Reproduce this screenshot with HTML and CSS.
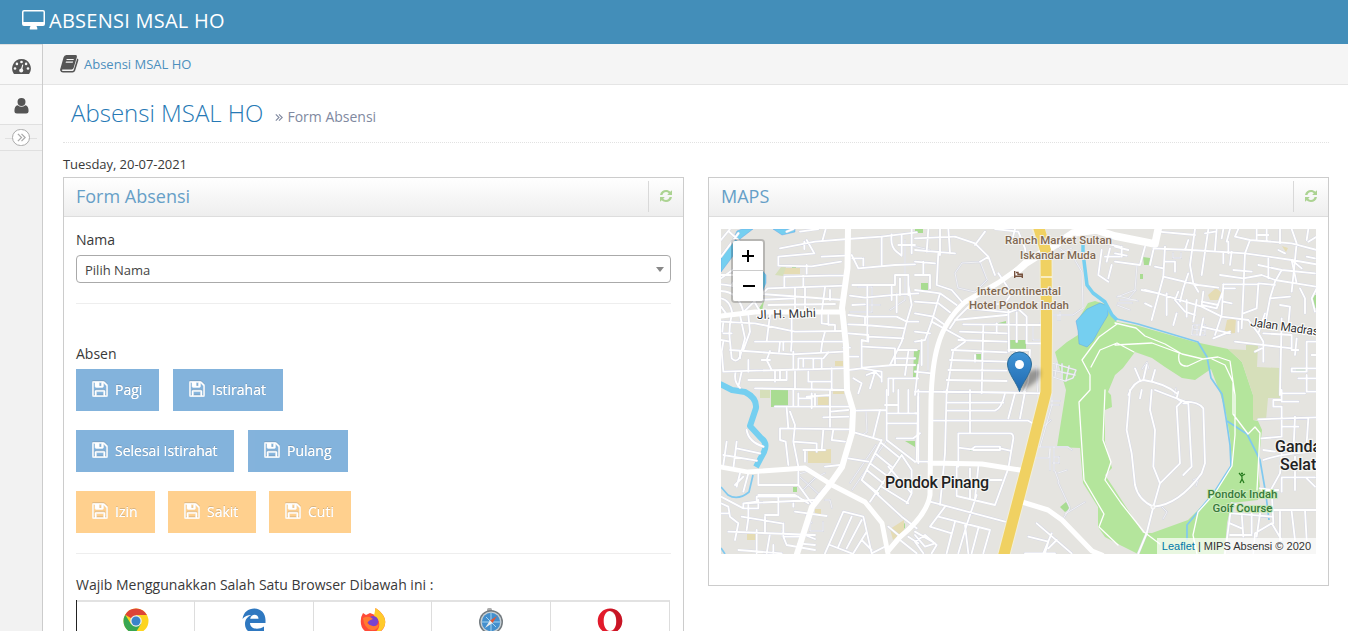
FILE: index.html
```html
<!DOCTYPE html>
<html lang="id">
<head>
<meta charset="utf-8">
<title>Absensi MSAL HO</title>
<link rel="stylesheet" href="styles.css">
</head>
<body>
<svg class="defs" width="0" height="0" aria-hidden="true">
  <defs>
    <symbol id="save" viewBox="0 0 16 16"><path stroke="#fff" stroke-width=".45" fill-rule="evenodd" d="M1.3 .3H11.2Q11.9 .3 12.4.7L15.3 3.6Q15.7 4.1 15.7 4.8V14.6Q15.7 15.7 14.6 15.7H1.4Q.3 15.7 .3 14.6V1.4Q.3 .3 1.3 .3ZM1.5 1.5V14.5H3V10.3Q3 9.2 4.1 9.2H11.9Q13 9.2 13 10.3V14.5H14.5V4.9L11.5 1.8V5.3Q11.5 6.4 10.4 6.4H4.1Q3 6.4 3 5.3V1.5ZM7.2 1.5V5H9.5V1.5ZM4.4 10.6V14.5H11.6V10.6Z"/></symbol>
    <symbol id="refresh" viewBox="0 0 14 14"><path d="M1 6C1.6 2.7 4.1 1 7 1C8.7 1 10.1 1.6 11.3 2.7L12.6 1.4Q13 1.1 13 1.7V6H8.7Q8.2 6 8.6 5.5L9.8 4.2C7.6 2.1 4.3 2.9 3.4 6ZM13 8C12.4 11.3 9.9 13 7 13C5.3 13 3.9 12.4 2.7 11.3L1.4 12.6Q1 12.9 1 12.3V8H5.3Q5.8 8 5.4 8.5L4.2 9.8C6.4 11.9 9.7 11.1 10.6 8Z"/></symbol>
    <symbol id="angles" viewBox="0 0 10 10"><path d="M1 1l4 4-4 4M5 1l4 4-4 4" fill="none" stroke="currentColor" stroke-width="1.4"/></symbol>
  </defs>
</svg>

<header class="navbar">
  <svg class="brand-icon" viewBox="0 0 23 20"><path fill="#fff" fill-rule="evenodd" d="M2 0H21Q23 0 23 2V14Q23 16 21 16H14.5L15.3 18V19.6H7.7V18L8.500 16H2Q0 16 0 14V2Q0 0 2 0ZM2 1.500Q1.500 1.500 1.500 2V12H21.500V2Q21.500 1.500 21 1.500Z"/></svg>
  <span class="brand">ABSENSI MSAL HO</span>
</header>

<div class="shell">
  <nav class="sidebar">
    <a class="side-item"><svg width="19" height="15" viewBox="0 0 19 15"><path fill="#555" d="M9.5 0A9.4 9.4 0 0 1 17.4 14.4Q17 15 16.4 15H2.6Q2 15 1.6 14.4A9.4 9.4 0 0 1 9.5 0Z"/><g fill="#f8f8f8"><circle cx="3" cy="9.5" r="1.3"/><circle cx="4.9" cy="4.9" r="1.3"/><circle cx="9.5" cy="3" r="1.3"/><circle cx="14.1" cy="4.9" r="1.3"/><circle cx="16" cy="9.5" r="1.3"/><circle cx="9.2" cy="11.6" r="2"/><path d="M10.3 5.4l1 .3-1.2 5.6-1.4-.3z"/></g></svg></a>
    <a class="side-item"><svg width="15" height="16" viewBox="0 0 15 16"><path fill="#555" d="M7.5 0A4 4 0 0 1 11.5 4A4 4.2 0 0 1 7.5 8A4 4.2 0 0 1 3.5 4A4 4 0 0 1 7.5 0ZM3.7 7.3Q7.5 10.4 11.3 7.3Q14.6 7.7 14.6 13.2Q14.6 15.6 12.2 15.6H2.8Q.4 15.6 .4 13.2Q.4 7.7 3.7 7.3Z"/></svg></a>
    <div class="side-toggle"><span class="toggle-knob"><svg width="9" height="9"><use href="#angles"/></svg></span></div>
  </nav>

  <main class="main">
    <div class="crumbs">
      <svg width="19" height="18" viewBox="0 0 19 18"><path fill="#555" fill-rule="evenodd" d="M6.3 0H15.7Q17.4 .2 16.9 2L13.6 13Q13.1 14.4 11.6 14.4H2.7Q1.8 14.4 1.8 15.2Q2 16 3 16H12.4Q13.3 16 13.7 15L17.2 3.4Q18.9 3.8 18.3 5.4L15.2 15.6Q14.5 17.6 12.5 17.6H3Q.7 17.5 .1 15.3Q0 14.2 .5 13.3L3.6 2.3Q4.3 .2 6.3 0ZM6.7 4L6.4 5.1H13.5L13.9 4ZM6 6.6L5.6 7.7H12.7L13.1 6.6Z"/></svg>
      <a>Absensi MSAL HO</a>
    </div>
    <div class="content">
      <div class="page-header">
        <h1>Absensi MSAL HO</h1>
        <small><svg width="8" height="9"><use href="#angles"/></svg>Form Absensi</small>
      </div>
      <p class="date">Tuesday, 20-07-2021</p>
      <div class="columns">
        <section class="widget widget-form">
          <div class="widget-head"><h4>Form Absensi</h4><span class="tool"><svg width="14" height="14"><use href="#refresh"/></svg></span></div>
          <div class="widget-body">
            <label class="nama">Nama</label>
            <div class="select"><span>Pilih Nama</span><i></i></div>
            <hr>
            <label class="absen">Absen</label>
            <div class="btn-row">
              <button class="btn w83"><svg><use href="#save"/></svg>Pagi</button>
              <button class="btn w110"><svg><use href="#save"/></svg>Istirahat</button>
            </div>
            <div class="btn-row">
              <button class="btn w158"><svg><use href="#save"/></svg>Selesai Istirahat</button>
              <button class="btn w100"><svg><use href="#save"/></svg>Pulang</button>
            </div>
            <div class="btn-row tight">
              <button class="btn warn w79"><svg><use href="#save"/></svg>Izin</button>
              <button class="btn warn w88"><svg><use href="#save"/></svg>Sakit</button>
              <button class="btn warn w82"><svg><use href="#save"/></svg>Cuti</button>
            </div>
            <hr>
            <p class="note">Wajib Menggunakkan Salah Satu Browser Dibawah ini :</p>
            <div class="browsers">
              <div><svg width="26" height="26" viewBox="0 0 26 26"><circle cx="13" cy="13" r="12.5" fill="#fdd41f"/><path fill="#dd4437" d="M13 13L2.2 6.7A12.5 12.5 0 0 1 23.9 7H13Z"/><path fill="#38a652" d="M2.2 6.7A12.5 12.5 0 0 0 12 25.5L18 16L8 16Z"/><circle cx="13" cy="13" r="5.8" fill="#eee"/><circle cx="13" cy="13" r="4.5" fill="#3a83c9"/></svg></div>
              <div><svg width="24" height="26" viewBox="0 0 24 26"><path fill="#2f78c0" fill-rule="evenodd" d="M.5 11C1.5 4 6.3.5 12.3.5C19.2.5 23.5 5.5 23.5 12V15H8C8.2 21 16 22.5 22 18.5V23.5C14 28 3 25.5 3 16C3 11.5 5.5 8.7 9.3 7C5.5 7 2.5 8.5.5 11ZM8.2 10.7H16.5C16.5 5.5 9 5.5 8.2 10.7Z"/></svg></div>
              <div><svg width="26" height="26" viewBox="0 0 26 26"><path fill="#ff4b38" d="M3 5L6 7L10 5L15 7L15.5 0C20 3 25.5 8 25.2 14A12.2 12.2 0 0 1 .8 14Q.5 9 3 5Z"/><path fill="#ffca2b" d="M15.5 0C20 3 25.8 8 25.2 15C24.5 21 20 25 14 25C22 20 20 11 14 8Z"/><circle cx="13" cy="13.2" r="5.3" fill="#7743d0"/><path fill="#ff7b31" d="M3 10Q9 7 13 11Q9 12 7 15Q13 21 19 16Q18 23 11 22Q4 20 3 10Z"/></svg></div>
              <div><svg width="26" height="27" viewBox="0 0 26 27"><rect x="9" y="0" width="5" height="4" rx="1.5" fill="#aaa"/><circle cx="13" cy="14" r="12" fill="#737b80"/><circle cx="13" cy="14" r="10.5" fill="#c8d0d5"/><circle cx="13" cy="14" r="9.2" fill="#438fcd"/><path stroke="#a6d4f1" stroke-width="1" d="M13 5V23M4 14H22M8 9L18 19"/><path fill="#e35735" d="M19 8L14.5 15L12 12.5Z"/><path fill="#eee" d="M7 20L14.5 15L12 12.5Z"/></svg></div>
              <div><svg width="26" height="26" viewBox="0 0 26 26"><path fill="#e21b2c" fill-rule="evenodd" d="M13 .5C20 .5 25.3 6 25.3 13S20 25.5 13 25.5S.7 20 .7 13S6 .5 13 .5ZM13 3C9 3 6.7 7.5 6.7 13S9 23 13 23S19.3 18.5 19.3 13S17 3 13 3Z"/><path fill="#a80f1d" d="M15 .8C21 1.5 25.3 6.5 25.3 13S20 25 14 25.4C18 23 19.8 18 19.3 13Q19 5 13 3L10 2Q12 .5 15 .8Z" opacity=".45"/></svg></div>
            </div>
          </div>
        </section>

        <section class="widget widget-map">
          <div class="widget-head"><h4>MAPS</h4><span class="tool"><svg width="14" height="14"><use href="#refresh"/></svg></span></div>
          <div class="widget-body">
            <div class="map">
              <svg class="map-canvas" viewBox="721 229 595 325">
                <defs>
                  <linearGradient id="pin" x2="0" y2="1"><stop stop-color="#4094d5"/><stop offset="1" stop-color="#2069b0"/></linearGradient>
                  <filter id="soft" x="-30%" y="-30%" width="160%" height="160%"><feGaussianBlur stdDeviation="2"/></filter>
                  <g id="minor">
                    <g transform="translate(715 225) scale(.33333)">
                      <path d="M195 70L300 50L398 42L500 35L605 22M268 50V72M390 92L320 95M275 45L298 85L190 95V122L290 124L378 110M275 120V146M208 188V155L340 152H392M265 153V186M85 262L158 190L392 182M18 160L60 130M18 150H60M45 12L18 45M70 25L18 95M40 18L75 50M215 20L235 12M255 20L310 12M332 12L322 48"/>
                      <path d="M18 178Q80 180 115 225L140 268M18 198Q70 200 85 260M18 220Q45 225 52 265M18 245L35 268M60 165L50 180M120 225L240 220M140 207L385 225M240 190V262M270 187V262M330 187L320 262M160 240L360 237M345 195V225"/>
                      <path d="M18 290L120 295L240 320L385 318M50 270Q40 310 45 350L50 400Q65 415 75 395L90 340L75 270M100 270L105 320L85 375M165 268L155 350M230 268V350M25 325H50M120 350H385M18 345L45 350M25 290L22 320M195 350L192 380M230 350L228 378M45 375L90 378L230 388L385 380M320 268V295L360 300V315M340 270V300M330 320L322 350L318 380"/>
                      <path d="M25 350L20 380L25 440L120 437L385 430M75 378V400M165 378L155 405L170 435M100 405V440M140 405H165M235 380V430M250 430V400H320V428M265 425V405M295 428V400M340 382L325 400M350 430V495M240 490V440M80 440L70 485M62 440Q55 470 75 488M180 438V470M195 438V465M215 438V465M100 465H215M120 490L390 495M280 440V470H350M290 470V490M205 350V375"/>
                      <path d="M410 90L430 130L540 120L600 118M445 100V122M412 100H440M500 35V120M530 28Q525 65 545 80L560 92M560 30V88M590 12V85M550 60H600M412 180H540V150H580V210M405 212L450 218L555 208L610 205M457 180V345M530 185V225M545 208V262M555 160V210M412 240L450 238M400 270L450 275V300L400 298M450 275H545L575 290H610M450 300L570 310M580 180L590 240L575 290L560 350L525 420"/>
                      <path d="M400 325L460 330V350L440 345V430M445 365L540 370V420L440 428M385 368H405M460 335L565 340M440 390V425M525 420H600M545 400H600M550 375H605M400 395H430M400 435L440 430L500 440V470M520 510V460H610M415 460L440 475L430 505M455 450L480 440L465 490M480 440L500 460M535 460V500M580 380L570 450"/>
                    </g>
                    <g transform="translate(915 225) scale(.33333)">
                      <path d="M0 75L120 85M0 110L60 115M75 12V90M100 12L105 85M0 150H45V190M25 110V150M70 85L65 180L110 195L145 235M40 12L35 80M0 40L120 35M0 195L75 205L125 240M0 230L70 235L105 262M0 265L55 275L90 300M0 350L30 345L50 290L75 205M0 320L45 325M20 345V420M0 440L50 445M0 510L10 420"/>
                      <path d="M120 35L180 55L220 95L195 110M180 60L210 20M220 95L240 150M240 12L310 20L330 70L335 105M300 12L290 50"/>
                      <path d="M160 250L280 262M180 235L280 238M120 285L275 270M105 310L125 280L180 225M50 290L150 345M145 298L375 300M135 320L275 325M130 345L275 350M110 375L275 382M105 405L275 410M100 435L275 437M95 465L275 468M85 500L380 505M280 235L282 380M305 262V350M282 262L310 252L335 275V355H380M205 300L200 505M245 295V325M180 390V410M150 350L115 375L95 505M280 375H345L340 470L325 505M305 375L308 470"/>
                      <path d="M525 45L570 55L615 65M585 70L575 110M560 75L550 150L580 170M570 95H615M590 120L580 160M250 145L290 205M290 205L270 235"/>
                    </g>
                    <g transform="translate(1115 225) scale(.33333)">
                      <path d="M0 110L75 120M150 65L145 155L110 285M120 125L145 130M150 110H180V140M115 75L105 120M115 70L230 75L390 85L530 105L605 118M0 85L35 92M20 65V95M0 65L40 75M90 65L75 120M130 20L240 30M240 12L225 120L235 175M220 45L210 75M280 12L260 150M305 12L300 75M345 12L335 50M325 12L320 40M270 25L300 20M370 12L360 35L405 45L530 55L605 75M340 50V85M325 85V115M405 45L390 85L380 310M350 80L345 120M425 12V45M455 12V45M430 30H460M495 12V55M530 12L545 55L530 200"/>
                      <path d="M315 150L385 160L440 150L480 165L605 185M355 135L410 140M430 120L500 135L600 145M460 100V160M500 135L480 170L465 220L525 215M530 105L545 175M325 178H430L425 250L385 265M325 190H360M465 220L450 300M430 175L480 180M555 190L570 220V265M495 240L525 245L520 300M580 12L575 45M605 35L580 50M575 95L600 100M490 75L510 85M605 190L590 220L600 260"/>
                      <path d="M145 155L250 180L310 188M220 145L205 190L195 230M90 195L130 205L260 245L320 275L400 285M130 205L80 195M155 205V270M190 200L180 225L210 260L240 270M215 225V275M245 225L235 290M265 200L260 240L305 250L325 195M325 178L320 270L300 330M260 230L310 240M265 280L255 330M260 305L345 325M295 340L345 320M325 230L350 235M185 265L175 300M235 175L250 200M90 235L110 245"/>
                      <path d="M360 350L530 370M370 290V320M400 285L430 325L445 350V410M430 325L450 265M500 280L495 510M445 325L530 330M440 370L420 380M530 330V375H550M545 340L540 390M605 350H575V440H530V430H605M575 450V500H605M500 505H570M530 105L560 130M550 460H605M605 390H590"/>
                      <path d="M40 510Q55 470 85 465Q150 475 185 505M85 465L95 420M120 435L110 470M60 430L75 465"/>
                    </g>
                    <g transform="translate(715 390) scale(.33333)">
                      <path d="M35 155L25 225M65 155L55 235M65 175L135 190M25 195L125 212M95 120Q100 155 145 170M235 0V50M250 10V50M180 50H400M290 10V55M275 20L345 15M345 0V110M250 25H290M325 82L400 80M215 55L220 115M195 115L410 118M195 115V150L212 155L220 225M225 65L240 105L235 155L250 230M235 155L305 160V185M265 180L330 180M325 118L320 180M355 118L350 150L390 155M345 65L400 60M270 185V215M300 12V45M330 230L375 225M250 245V285H130V250M75 250L65 290M100 250L85 305M85 260L60 285M250 285L290 340"/>
                      <path d="M18 320L85 355V340L125 335V320H250M130 315H240L280 340M90 340L300 330M18 340L40 350L45 380L70 400L60 450M18 370H40M100 340V385L95 420M85 355H130V330M80 380L200 400M150 380V430M150 375H190V320M40 425L300 435M125 420V490M165 430L155 490M175 465V490M205 400V440L215 465L300 480M235 340V350M240 365L335 378M270 435L300 447M250 460L300 465M70 480L200 490M210 440H265"/>
                      <path d="M420 62L515 60V0M495 60L475 140M410 125L495 150M400 205L460 215M515 60V150L600 215M515 100H610M550 0V70M580 0V70M520 70H605M510 45H550M545 145H595L615 130M500 150L440 270L560 380L605 415M500 160L550 200M480 190L530 230M465 220L520 260M455 240L505 280M560 195L465 335M440 270L490 310M560 195L590 240V310L575 340M520 230L590 310M500 290L580 340M610 20V220"/>
                      <path d="M330 490L385 365L445 380L470 490M345 465L410 490M410 380L370 470M440 390L395 475M455 425L415 490M440 450L470 480M470 490L510 470M555 450L605 490M520 410L550 435M580 440L610 460"/>
                    </g>
                    <g transform="translate(915 390) scale(.33333)">
                      <path d="M0 5L330 8M95 0L90 190L75 345M0 70H10M10 0L5 215H45M95 38H265M95 62H240Q260 55 270 10M50 92H340L350 98M165 0V130M300 10L280 85M330 5L315 85M130 230V130H285Q295 130 295 145L280 235L240 345L125 318V230M130 173L170 178L180 170H255V180H175M255 175L285 182M165 235V325M180 325L190 230M215 270H260M45 335L270 395M90 350L45 410L110 430L95 490M70 380L225 420L205 490M185 315L155 405L130 490M120 395L95 490M190 415L170 490M150 405L160 490M0 455L30 435L65 465L50 490M0 425L60 460L30 470L0 435M0 455L25 490M0 215H45"/>
                      <path d="M365 400L470 490M340 440L400 455L390 490M410 430L385 490M330 490L420 490M425 450L400 475"/>
                    </g>
                    <g transform="translate(1115 390) scale(.33333)">
                      <path d="M45 0L35 120L50 190L60 285Q70 330 115 350M115 350Q190 345 260 250L270 220L265 55Q250 35 210 35L120 0M110 0L105 60L120 120L115 230L135 280L195 220L185 50L200 35L185 25L190 5M205 40H220L225 140L230 230L205 255M135 280L115 350L95 430L70 490M80 0L75 25"/>
                      <path d="M430 88L605 82M500 0V30H475V50H500V140L440 145M500 35H550M540 80L535 190M500 110H550M580 85L575 160M445 180L480 185M445 210Q500 190 605 185M500 190L495 250L470 295M500 262H600M500 265V305M540 200V300M575 265L600 290M440 300H490M435 295L470 300L475 400M350 340L430 360H605M350 340L330 490M350 370L470 380M345 400L380 415M380 370L385 440M410 360V430M435 370L425 440M345 435H410M470 400L500 450M470 400L420 430L415 490M495 365V450M530 365L540 450M570 360L575 450"/>
                    </g>
                  </g>
                  <g id="detail">
                    <path d="M1036 366L1040 430L1051 420M1052 363L1076 370L1073 378L1065 381L1053 377ZM1057 363L1055 377M1062 364V380M1069 366L1066 381M1052 370L1075 375M1052 391V405L1040 447M1050 401H1060M1048 405H1059M1037 447H1068L1072 450M1035 458H1049L1050 449M1054 447V471M1050 448V470M1055 457H1059V463H1053M1055 471L1059 482M1058 482L1070 508L1063 519M1065 514L1085 502M1058 473L1067 470M1117 305L1130 310M1120 300H1136M1118 303H1132M1136 290L1129 298M1118 296L1138 301M1173 253V258H1181V253M1193 325H1205V335H1192ZM1193 329L1205 331M1197 325V335M1142 369L1147 362L1149 369M1155 383L1166 387"/>
                    <path d="M905 240V300L890 310M858 287H872V312H850M928 335V370M782 530V537M810 522V531H823V522M865 305H880M887 440L852 490M876 445L850 483M908 245L930 250M1040 323L1048 340M1033 325V340H1045M980 262L962 263L955 273L958 288L975 292L987 280ZM1048 240L1055 255L1072 248M1055 245L1072 257M1072 255L1082 272L1083 308M1052 315H1073L1083 308M1058 315V320M1060 312V320M1137 265L1135 290L1117 297M799 474L812 470M800 477L822 497M803 490L815 478L825 473M812 502L825 487M825 500H830L832 508M806 515L812 523M1176 388L1174 395M1193 480L1199 477L1196 486M1162 507L1167 512L1163 519M866 410L867 432L862 435"/>
                  </g>
                  <g id="major">
                    <path stroke-width="6" d="M848 229L847.5 268L842 308L846 345L847 390L853 410L852 433L842 467L828 487L812 507L797 554"/>
                    <path stroke-width="4.8" d="M721 316L755 312H843M721 467L748 472L805 468L832 485L865 502L882 523L888 554"/>
                    <path stroke-width="5" d="M1025 264L998 283L965 302Q945 320 938 345Q932 365 931 400L930 495Q927 515 900 537L888 551M930 463L982 464L1020 470M1022 502L1048 510L1062 520L1092 551L1102 555"/>
                    <path stroke-width="7.5" d="M1015 273L1026 263L1058 243L1073 233L1096 230L1115 236L1155 244L1159 225"/>
                  </g>
                </defs>
                <rect x="721" y="229" width="595" height="325" fill="#e5e4e0"/>
                <path fill="#b4e59c" fill-rule="evenodd" d="M1088 303L1095 301L1108 305L1109 312L1117 322L1135 325L1195 342L1228 349L1242 362L1253 395V420L1258 421L1262 430L1258 467L1260 488L1258 500L1232 503L1227 523L1225 554H1138L1120 545L1105 537L1098 527V507L1083 483L1080 448L1057 447L1066 390L1055 352L1067 342L1078 335V320ZM1115 375L1123 368L1135 352L1152 358L1165 367L1182 378L1195 380L1211 369L1220 393L1226 413L1230 437L1232 463L1215 493L1188 520L1152 533H1143L1128 510L1115 490L1105 475L1112 468L1105 442V410L1112 407L1111 395L1108 392Z"/>
                <path fill="#d6dfba" d="M1228 349L1246 350V345H1258L1257 367L1280 368V398H1268L1266 420H1253V395L1242 362Z"/>
                <path fill="#a9dc92" d="M914 350H920L916 377H913ZM771 390H788V407H771ZM1009 340H1026V349H1009ZM974 354H981V361H974ZM921 283H928V290H921ZM995 324L1006 321V324ZM1313 295H1316V308H1313ZM1143 257L1150 258V265H1144ZM1140 274H1143V279H1140ZM915 229H923V233H915ZM793 487H797V492H793ZM1060 507L1066 502L1071 508L1065 512ZM970 449H993V451H970ZM905 441H915V447ZM757 311L764 301L762 311ZM792 267H796V272H792ZM901 526L905 523L905 528L902 530ZM1296 369H1306V372H1296Z"/>
                <path stroke="#a9dc92" stroke-width="2" d="M877 492L902 454"/>
                <path fill="#e5dcb4" d="M808 451L831 449V463H808ZM818 397H829V405H818ZM783 268H800V274H783ZM835 361H843V366H835ZM833 390H844V394H833ZM890 529L904 520V530L893 540ZM1208 295L1216 288L1222 293L1218 300H1210ZM1227 320L1236 318L1235 333L1224 334ZM747 534H757V540H747ZM815 509H821V514H815ZM1282 246L1288 248L1286 252Z"/>
                <path fill="#d6dfba" d="M775 275L781 267H786L783 276ZM760 388H770V398H760Z"/>
                <path fill="#75cff0" stroke="#5c9be7" stroke-width=".4" d="M721 255L731 243L737 231L742 229H753L740 239L733 249V256L721 272ZM760 268L766 275V283L763 290H758ZM773 229H795V232L782 235ZM1076 321L1087 309L1100 303L1108 306V315L1099 330L1093 341L1087 347L1079 344L1078 331Z"/>
                <g fill="none" stroke="#75cff0" stroke-linejoin="round">
                  <path stroke-width="6" d="M720 384L732 390L745 392Q757 398 756 408L750 426L761 438Q768 443 764 452L756 467"/>
                  <path stroke-width="3.5" d="M1083 238V253L1087 285L1093 293L1105 302L1112 315L1117 320"/>
                  <path stroke-width="1.7" stroke="#80c9ef" d="M1117 319L1138 324L1198 342L1207 357L1211 378L1222 394L1226 418L1230 445L1231 466L1215 491L1187 525V540M1227 421L1247 434L1260 460L1266 495L1269 520M753 475L749 492Q738 501 728 495L721 487M721 548L725 554"/>
                </g>
                <g fill="none" stroke-linejoin="round" stroke-linecap="round">
                  <use href="#detail" stroke="#d4d6e2" stroke-width="1.8"/>
                  <use href="#detail" stroke="#f4f4f5" stroke-width=".9"/>
                  <use href="#minor" stroke="#d5d7e5" stroke-width="8.1"/>
                  <path stroke="#f1eed8" stroke-width="13" d="M1037 225L1046 252L1046.500 325L1046 392L1030 455L1003 558"/>
                  <use href="#minor" stroke="#fff" stroke-width="5.5"/>
                  <use href="#major" stroke="#fff"/>
                  <path stroke="#fff" stroke-width="1.3" d="M1115 323L1136 328L1145 336L1165 344L1182 354L1203 359L1218 357L1230 361L1235 395L1235 435L1232 466L1215 493L1198 512L1193 535L1197 554M1179 354Q1177 367 1188 366L1203 359M1115 345L1152 343L1182 354M1212 359L1225 365L1233 382V414L1248 434L1255 427L1260 433L1257 490M1117 324L1099 337L1082 360L1090 375V390L1079 402L1082 449L1084 480L1104 514L1099 527L1118 545M1105 390L1103 440L1111 462L1105 480L1121 503L1144 532L1160 544M1134 352L1117 343L1100 350L1091 367"/>
                  <path stroke="#f0d162" stroke-width="11" d="M1038 225L1046 252L1046.500 325L1046 392L1030 455L1003 558"/>
                </g>
                <path stroke="#fff" stroke-width="1.2" d="M1041 277H1052"/>
                <circle cx="1153" cy="507" r="2" fill="#eee" stroke="#fff"/>
                <g class="poi" text-anchor="middle">
                  <text x="1058.500" y="244" textLength="107">Ranch Market Sultan</text>
                  <text x="1058" y="258.500" textLength="76">Iskandar Muda</text>
                  <text x="1019" y="295" textLength="84">InterContinental</text>
                  <text x="1019" y="309" textLength="100">Hotel Pondok Indah</text>
                </g>
                <g class="poi green" text-anchor="middle">
                  <text x="1242.500" y="497.500" textLength="70">Pondok Indah</text>
                  <text x="1242.500" y="512" textLength="60">Golf Course</text>
                </g>
                <path fill="none" stroke="#76523e" stroke-width="1.4" d="M1014.700 271V278M1014 276.300H1023M1022.300 278V274.300H1018V272.500H1016"/>
                <path fill="none" stroke="#257a1d" stroke-width="1.2" d="M1239 473L1241.500 476L1245 474M1242 476V479L1240 483M1242 479L1244 483"/><circle cx="1242" cy="473.500" r="1.1" fill="#257a1d"/>
                <g class="place">
                  <text x="885" y="488" textLength="104">Pondok Pinang</text>
                  <text x="1275" y="452">Gandaria</text>
                  <text x="1280" y="470">Selatan</text>
                </g>
                <g class="street">
                  <text transform="translate(757 319) rotate(-2)" textLength="59">Jl. H. Muhi</text>
                  <text transform="translate(1250 326) rotate(8)" textLength="69">Jalan Madras</text>
                </g>
                <path fill="#000" opacity=".35" filter="url(#soft)" d="M1020 391L1024 376Q1032 367 1040 370Q1042 382 1020 391Z"/>
                <path fill="url(#pin)" stroke="#2e6c97" d="M1019.500 391.500C1017 383 1007.500 373 1007.500 364A12 12 0 0 1 1031.500 364C1031.500 373 1022 383 1019.500 391.500Z"/>
                <circle cx="1019.500" cy="364.500" r="4.500" fill="#fff"/>
              </svg>
              <div class="zoom"><a><svg width="14" height="14"><path d="M7 1V13M1 7H13" stroke="#000" stroke-width="2"/></svg></a><a><svg width="14" height="14"><path d="M2 7H14" stroke="#000" stroke-width="2"/></svg></a></div>
              <div class="attribution"><a>Leaflet</a> | MIPS Absensi © 2020</div>
            </div>
          </div>
        </section>
      </div>
    </div>
  </main>
</div>
</body>
</html>
```
FILE: styles.css
```css
* { box-sizing: border-box; }
html, body { margin: 0; height: 631px; overflow: hidden; }
body { font-family: "Open Sans", "Noto Sans", sans-serif; font-size: 13px; color: #393939; background: #fff; line-height: 20px; }
.defs { position: absolute; }
svg { display: block; flex: none; }
h1, h4, p { margin: 0; }

.navbar { height: 44px; background: #438eb9; display: flex; align-items: flex-start; padding: 10px 0 0 22px; gap: 4px; color: #fff; }
.brand-icon { width: 23px; height: 20px; }
.brand { font-size: 20px; line-height: 21px; letter-spacing: .25px; white-space: nowrap; }

.shell { display: flex; height: 587px; }
.sidebar { width: 43px; flex: none; background: #f2f2f2; border-right: 1px solid #ccc; }
.side-item { display: flex; height: 40px; background: #f8f8f8; border-top: 1px solid #e0e0e0; align-items: center; justify-content: center; padding: 3px 0 0 1px; }
.side-item + .side-item { padding-top: 2px; }
.side-toggle { height: 27px; border-top: 1px solid #e0e0e0; border-bottom: 1px solid #e0e0e0; background: linear-gradient(#e0e0e0, #e0e0e0) 5px 13px / 32px 1px no-repeat #f3f3f3; display: flex; justify-content: center; align-items: center; }
.toggle-knob { width: 18px; height: 17px; border: 1px solid #aaa; border-radius: 9px; background: #fff; color: #aaa; display: flex; align-items: center; justify-content: center; }

.main { flex: 1; min-width: 0; }
.crumbs { height: 41px; background: #f5f5f5; border-bottom: 1px solid #e5e5e5; display: flex; align-items: center; padding-left: 17px; gap: 5px; color: #4c8fbd; }
.content { padding: 0 19px 0 20px; }
.page-header { height: 58px; border-bottom: 1px dotted #e2e2e2; display: flex; align-items: flex-start; padding: 11px 8px 0; }
.page-header h1 { font-size: 24px; line-height: 34px; font-weight: 300; color: #2679b5; white-space: nowrap; }
.page-header small { font-size: 14px; line-height: 20px; color: #8089a0; margin: 11px 0 0 12px; display: flex; align-items: center; gap: 4px; }
.date { height: 34px; padding-top: 11px; line-height: 21px; letter-spacing: -.05px; }

.columns { display: grid; grid-template-columns: 621px 621px; gap: 24px; align-items: start; }
.widget { border: 1px solid #ccc; background: #fff; }
.widget-form { height: 454px; border-bottom: 0; }
.widget-map { height: 409px; }
.widget-head { height: 39px; border-bottom: 1px solid #ddd; background: linear-gradient(#fff, #eee); display: flex; justify-content: space-between; align-items: flex-start; padding-left: 12px; }
.widget-head h4 { font-size: 18px; font-weight: 400; line-height: 36px; color: #669fc7; }
.tool { width: 35px; height: 31px; margin-top: 3px; border-left: 1px solid #d9d9d9; display: flex; align-items: center; justify-content: center; fill: #acd392; }
.tool svg { margin-top: -1px; }
.widget-body { padding: 12px 12px 0; }
.widget-body label { display: block; font-size: 14px; line-height: 20px; height: 26px; color: #393939; }
.widget-body label.nama { line-height: 22px; }
.select { height: 28px; border: 1px solid #aaa; border-radius: 4px; display: flex; align-items: center; justify-content: space-between; padding: 2px 6px 0 8px; color: #444; }
.select i { border: 4px solid transparent; border-top: 5px solid #888; border-bottom: 0; margin-bottom: 2px; }
hr { border: 0; border-top: 1px solid #eee; margin: 20px 0; }
.widget-body label.absen { margin-top: 40px; height: 25px; }
.btn-row { display: flex; gap: 14px; margin-bottom: 19px; }
.btn-row.tight { gap: 13px; }
.btn { height: 42px; border: 0; padding: 0 0 0 16px; background: #428bca; color: #fff; opacity: .65; font: 400 14px/20px "Open Sans", sans-serif; display: flex; align-items: center; text-shadow: 0 -1px 0 rgba(0,0,0,.25), 0 0 .5px #fff; white-space: nowrap; gap: 7px; }
.btn svg { width: 16px; height: 16px; fill: #fff; margin-top: -3px; filter: drop-shadow(0 -1px 0 rgba(0,0,0,.2)); }
.warn { background: #ffb752; }
.w79 { width: 79px; } .w82 { width: 82px; } .w83 { width: 83px; } .w88 { width: 88px; }
.w100 { width: 100px; } .w110 { width: 110px; } .w158 { width: 158px; }
.note { font-size: 14px; line-height: 22px; height: 26px; }
.browsers { display: grid; grid-template-columns: 118px 119px 118px 119px 119px; width: 594px; height: 31px; overflow: hidden; border-left: 1px solid #222; }
.browsers > div { border-top: 2px solid #e2e2e2; border-right: 1px solid #ddd; display: flex; justify-content: center; padding-top: 6px; }

.map { position: relative; height: 325px; overflow: hidden; }
.map-canvas { width: 595px; height: 325px; }
.poi { font: 500 11.5px Roboto, sans-serif; fill: #806852; stroke: #f2f0ec; stroke-width: 2px; paint-order: stroke; }
.poi.green { fill: #37783b; stroke: #c9eab8; }
.place { font: 500 16px Roboto, sans-serif; fill: #222; stroke: #f4f4f2; stroke-width: 2.5px; paint-order: stroke; }
.street { font: 400 12px Roboto, sans-serif; fill: #333; stroke: #fff; stroke-width: 2px; paint-order: stroke; }
.zoom { position: absolute; left: 10px; top: 10px; border: 2px solid rgba(0,0,0,.2); border-radius: 4px; background-clip: padding-box; }
.zoom a { display: flex; width: 30px; height: 30px; background: #fff; align-items: center; justify-content: center; }
.zoom a:first-child { border-bottom: 1px solid #ccc; border-radius: 2px 2px 0 0; }
.zoom a:last-child { border-radius: 0 0 2px 2px; }
.attribution { position: absolute; right: 0; bottom: 0; height: 16px; padding: 0 5px; background: rgba(255,255,255,.7); font: 11px/16px "Liberation Sans", Arial, sans-serif; color: #333; white-space: nowrap; }
.attribution a { color: #0078a8; }
```
